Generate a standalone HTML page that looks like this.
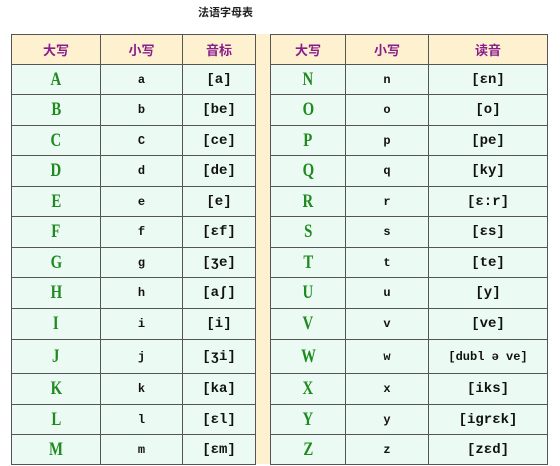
<!DOCTYPE html>
<html><head><meta charset="utf-8"><style>
body{margin:0;width:560px;height:466px;background:#fff;position:relative;overflow:hidden;font-family:"Liberation Serif","Noto Serif CJK SC",serif}
.t{position:absolute;left:198px;top:4px;font:bold 11px "Liberation Sans","Noto Sans CJK SC",sans-serif;color:#222}
table{position:absolute;top:34px;border-collapse:collapse}
td{border:1px solid #555;text-align:center;padding:0;background:#ebfbf3;color:#111;font-size:14px;font-weight:bold}
tr.h td{background:#fdf1d0;color:#8a1c8c;font:bold 13px "Noto Sans CJK SC",sans-serif;height:29px}
td.u{color:#1f8a1f;font-size:19px;font-family:"Liberation Serif",serif}
td.u span{display:inline-block;transform:scaleX(.78)}
td.l{font-family:"Liberation Mono",monospace;font-size:12px}
td.p{font-family:"Liberation Mono","DejaVu Sans Mono",monospace;font-size:14px;font-weight:bold}
.sep{position:absolute;left:255px;top:34px;width:14px;height:430px;background:#fdf1d0;border-left:1px solid #555;border-right:1px solid #555}
</style></head><body>
<div class="t">法语字母表</div>
<div class="sep"></div>
<table style="left:11px">
<colgroup><col style="width:89px"><col style="width:82px"><col style="width:73px"></colgroup>
<tr class="h"><td>大写</td><td>小写</td><td>音标</td></tr>
<tr style="height:30px"><td class="u"><span>A</span></td><td class="l">a</td><td class="p">[a]</td></tr>
<tr style="height:31px"><td class="u"><span>B</span></td><td class="l">b</td><td class="p">[be]</td></tr>
<tr style="height:30px"><td class="u"><span>C</span></td><td class="l">C</td><td class="p">[ce]</td></tr>
<tr style="height:31px"><td class="u"><span>D</span></td><td class="l">d</td><td class="p">[de]</td></tr>
<tr style="height:30px"><td class="u"><span>E</span></td><td class="l">e</td><td class="p">[e]</td></tr>
<tr style="height:31px"><td class="u"><span>F</span></td><td class="l">f</td><td class="p">[ɛf]</td></tr>
<tr style="height:30px"><td class="u"><span>G</span></td><td class="l">g</td><td class="p">[ʒe]</td></tr>
<tr style="height:31px"><td class="u"><span>H</span></td><td class="l">h</td><td class="p">[aʃ]</td></tr>
<tr style="height:31px"><td class="u"><span>I</span></td><td class="l">i</td><td class="p">[i]</td></tr>
<tr style="height:34px"><td class="u"><span>J</span></td><td class="l">j</td><td class="p">[ʒi]</td></tr>
<tr style="height:31px"><td class="u"><span>K</span></td><td class="l">k</td><td class="p">[ka]</td></tr>
<tr style="height:30px"><td class="u"><span>L</span></td><td class="l">l</td><td class="p">[ɛl]</td></tr>
<tr style="height:30px"><td class="u"><span>M</span></td><td class="l">m</td><td class="p">[ɛm]</td></tr>
</table>
<table style="left:270px">
<colgroup><col style="width:75px"><col style="width:83px"><col style="width:119px"></colgroup>
<tr class="h"><td>大写</td><td>小写</td><td>读音</td></tr>
<tr style="height:30px"><td class="u"><span>N</span></td><td class="l">n</td><td class="p">[ɛn]</td></tr>
<tr style="height:31px"><td class="u"><span>O</span></td><td class="l">o</td><td class="p">[o]</td></tr>
<tr style="height:30px"><td class="u"><span>P</span></td><td class="l">p</td><td class="p">[pe]</td></tr>
<tr style="height:31px"><td class="u"><span>Q</span></td><td class="l">q</td><td class="p">[ky]</td></tr>
<tr style="height:30px"><td class="u"><span>R</span></td><td class="l">r</td><td class="p">[ɛ:r]</td></tr>
<tr style="height:31px"><td class="u"><span>S</span></td><td class="l">s</td><td class="p">[ɛs]</td></tr>
<tr style="height:30px"><td class="u"><span>T</span></td><td class="l">t</td><td class="p">[te]</td></tr>
<tr style="height:31px"><td class="u"><span>U</span></td><td class="l">u</td><td class="p">[y]</td></tr>
<tr style="height:31px"><td class="u"><span>V</span></td><td class="l">v</td><td class="p">[ve]</td></tr>
<tr style="height:34px"><td class="u"><span>W</span></td><td class="l">w</td><td class="p" style="font-size:12px">[dubl ə ve]</td></tr>
<tr style="height:31px"><td class="u"><span>X</span></td><td class="l">x</td><td class="p">[iks]</td></tr>
<tr style="height:30px"><td class="u"><span>Y</span></td><td class="l">y</td><td class="p">[igrɛk]</td></tr>
<tr style="height:30px"><td class="u"><span>Z</span></td><td class="l">z</td><td class="p">[zɛd]</td></tr>
</table>
</body></html>
